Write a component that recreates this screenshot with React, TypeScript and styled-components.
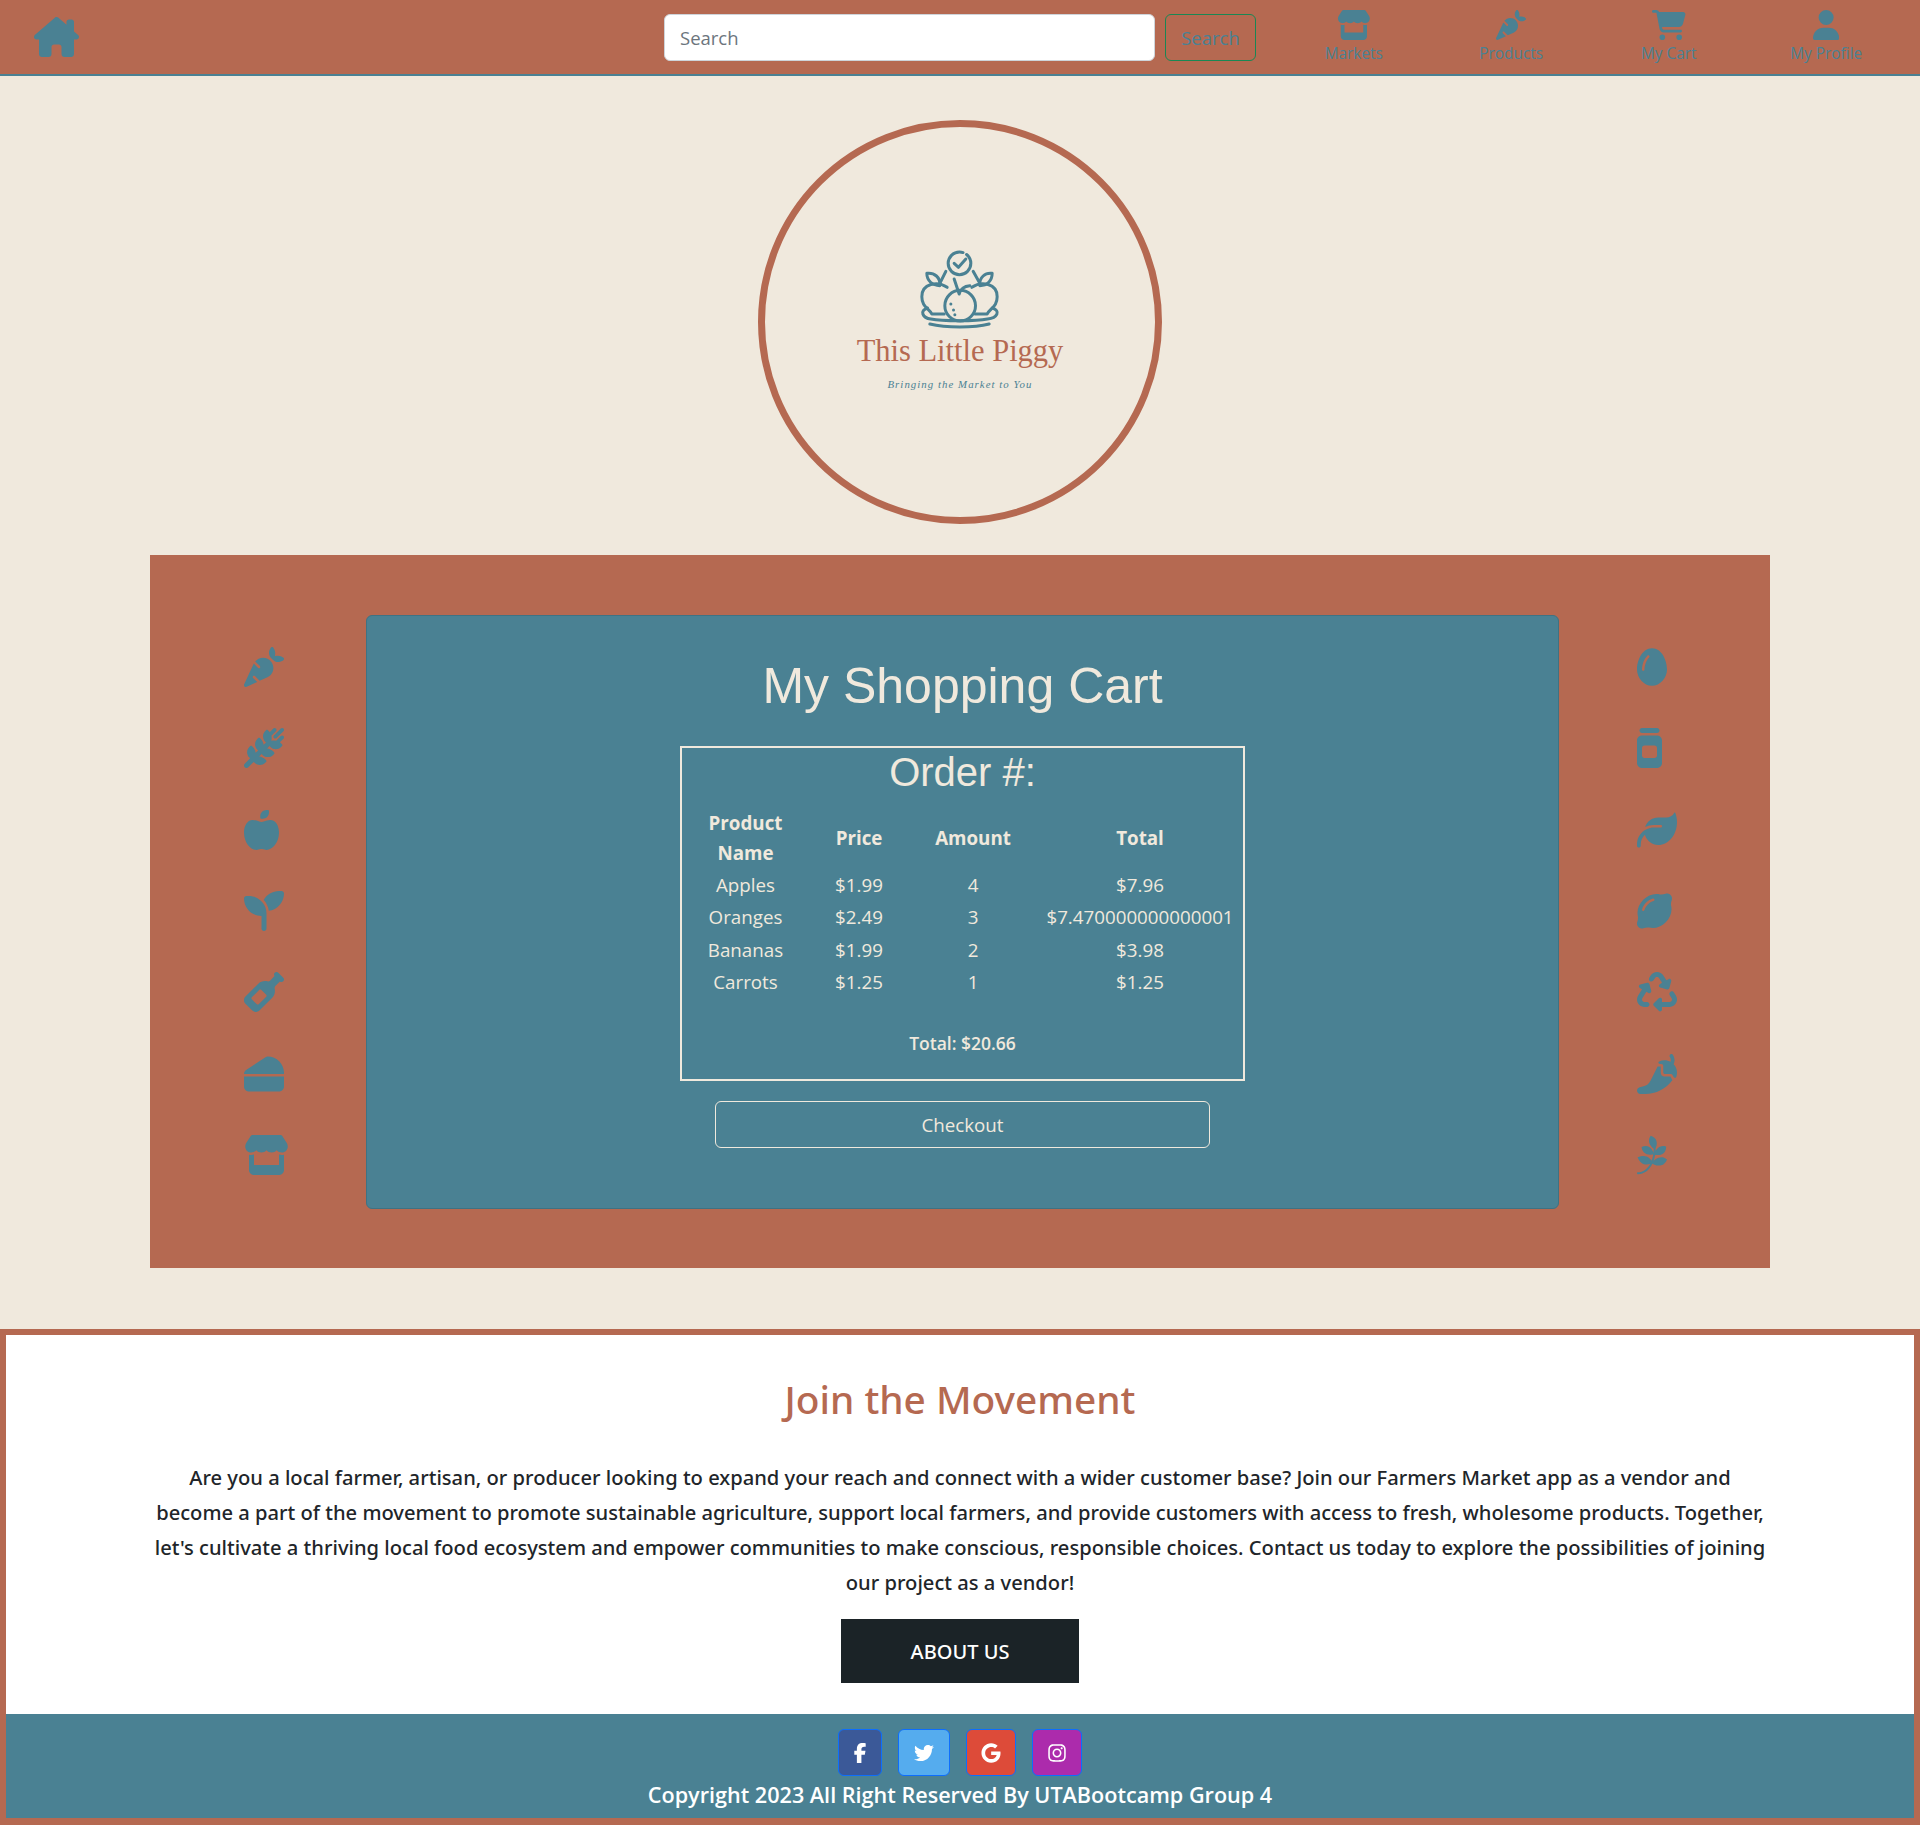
import * as React from 'react';
import styled, { createGlobalStyle } from 'styled-components';
import {
  FaAppleWhole, FaCarrot, FaCartShopping, FaCheese, FaEgg, FaFacebookF, FaGoogle, FaHouseChimney,
  FaInstagram, FaJar, FaLeaf, FaLemon, FaPagelines, FaPepperHot, FaRecycle, FaSeedling, FaStore,
  FaTwitter, FaUser, FaWheatAwn, FaWineBottle,
} from 'react-icons/fa6';

const terracotta = '#b56951';
const teal = '#4a8193';
const cream = '#f0e9dd';
const bodyFont = '"Open Sans", "Noto Sans", sans-serif';
const mediumFont = '"Noto Sans", "Open Sans", sans-serif';
const headFont = '"Liberation Sans", Arial, sans-serif';

const GlobalStyle = createGlobalStyle`
  * { box-sizing: border-box; }
  body {
    margin: 0;
    background: ${cream};
    font-family: ${bodyFont};
    color: #212529;
  }
`;

// font awesome glyphs are wider or narrower than 1em, so the box follows the viewBox
const Glyph = styled.span<{ $w: number; $h: number }>`
  display: block;
  flex: none;
  width: ${(p) => p.$w}px;
  height: ${(p) => p.$h}px;
  & svg { display: block; width: 100%; height: 100%; }
`;

const Header = styled.header`
  height: 76px;
  background: ${terracotta};
  border-bottom: 2px solid ${teal};
  display: flex;
  align-items: center;
  padding: 0 15px 0 34px;
  color: ${teal};
`;
const HomeLink = styled.a`
  display: flex;
  color: ${teal};
  margin-right: auto;
`;
const SearchInput = styled.input`
  width: 491px;
  height: 47px;
  border: 1px solid #ced4da;
  border-radius: 6px;
  background: #fff;
  padding: 0 15px;
  font-family: ${bodyFont};
  font-size: 18.5px;
  &::placeholder { color: #6c757d; }
`;
const SearchButton = styled.button`
  width: 91px;
  height: 47px;
  margin-left: 10px;
  margin-right: 19px;
  background: transparent;
  border: 1px solid #198754;
  border-radius: 6px;
  color: ${teal};
  font-family: ${bodyFont};
  font-size: 18.5px;
  padding: 0;
`;
const NavItem = styled.a`
  width: 157.5px;
  height: 62px;
  display: flex;
  flex-direction: column;
  align-items: center;
  color: ${teal};
  font-size: 15.4px;
  line-height: 20px;
  padding-top: 4px;
  & > span { margin-bottom: 4px; }
`;
const Main = styled.main`
  display: flex;
  flex-direction: column;
  align-items: center;
  padding-top: 44px;
  padding-bottom: 61px;
`;
const LogoCircle = styled.div`
  width: 404px;
  height: 404px;
  border: 7px solid ${terracotta};
  border-radius: 50%;
  display: flex;
  flex-direction: column;
  align-items: center;
  justify-content: center;
  margin-bottom: 31px;
`;
const LogoMark = styled.svg`
  width: 82px;
  height: 80px;
  margin-top: -5px;
`;
const LogoName = styled.div`
  font-family: "Liberation Serif", serif;
  font-size: 30.5px;
  line-height: 40px;
  color: ${terracotta};
  margin-top: 2px;
`;
const LogoTag = styled.div`
  font-family: "Liberation Serif", serif;
  font-style: italic;
  font-size: 10.8px;
  line-height: 14px;
  letter-spacing: 1.05px;
  color: ${teal};
  margin-top: 6px;
`;
const Panel = styled.section`
  width: 1620px;
  height: 713px;
  background: ${terracotta};
  display: flex;
  padding-top: 60px;
`;
const IconColumn = styled.div<{ $width: number; $left: number }>`
  width: ${(p) => p.$width}px;
  padding-left: ${(p) => p.$left}px;
  padding-top: 32px;
  display: flex;
  flex-direction: column;
  align-items: flex-start;
  gap: 41.33px;
  color: ${teal};
`;
const Card = styled.div`
  width: 1193px;
  height: 594px;
  background: ${teal};
  border: 1px solid #3f7283;
  border-radius: 6px;
  padding-top: 41px;
  display: flex;
  flex-direction: column;
  align-items: center;
  color: ${cream};
`;
const CardTitle = styled.h1`
  margin: 0 0 31px;
  font-family: ${headFont};
  font-size: 50px;
  font-weight: 400;
  line-height: 58px;
`;
const OrderBox = styled.div`
  width: 565px;
  height: 335px;
  border: 2px solid ${cream};
  display: flex;
  flex-direction: column;
  align-items: center;
`;
const OrderTitle = styled.h2`
  margin: 0 0 10px;
  font-family: ${headFont};
  font-size: 40px;
  font-weight: 400;
  line-height: 48px;
`;
const OrderTable = styled.table`
  width: 561px;
  table-layout: fixed;
  border-collapse: collapse;
  font-size: 18.75px;
  text-align: center;
`;
const Head = styled.th`
  padding: 0;
  font-weight: 700;
  line-height: 30px;
  height: 63px;
`;
const Cell = styled.td`
  padding: 0;
  height: 32.3px;
  line-height: 30px;
  white-space: nowrap;
`;
const OrderTotal = styled.div`
  margin-top: 30px;
  font-size: 17.5px;
  font-weight: 600;
  line-height: 30px;
`;
const CheckoutButton = styled.button`
  margin-top: 20px;
  width: 495px;
  height: 47px;
  background: transparent;
  border: 1px solid ${cream};
  border-radius: 6px;
  color: ${cream};
  font-family: ${bodyFont};
  font-size: 18.75px;
`;
const Footer = styled.footer`
  height: 496px;
  background: #fff;
  border: 6px solid ${terracotta};
  border-bottom-width: 7px;
  display: flex;
  flex-direction: column;
  align-items: center;
`;
const JoinTitle = styled.h2`
  margin: 39px 0 36px;
  font-family: ${mediumFont};
  font-size: 38.8px;
  font-weight: 500;
  line-height: 50px;
  color: ${terracotta};
`;
const JoinText = styled.p`
  margin: 0 0 19px;
  width: 1620px;
  font-family: ${mediumFont};
  font-size: 20.15px;
  font-weight: 500;
  line-height: 35px;
  text-align: center;
  color: #212529;
`;
const AboutButton = styled.button`
  width: 238px;
  height: 64px;
  background: #1b2327;
  border: 0;
  color: #fff;
  font-family: ${mediumFont};
  font-size: 20px;
  font-weight: 500;
`;
const Legal = styled.div`
  margin-top: auto;
  width: 100%;
  height: 104px;
  background: ${teal};
  padding-top: 15px;
  display: flex;
  flex-direction: column;
  align-items: center;
`;
const SocialRow = styled.div`
  display: flex;
  gap: 16px;
`;
const SocialLink = styled.a<{ $bg: string; $width: number }>`
  width: ${(p) => p.$width}px;
  height: 47px;
  background: ${(p) => p.$bg};
  border: 1px solid #0d6efd;
  border-radius: 6px;
  color: #fff;
  display: flex;
  align-items: center;
  justify-content: center;
  font-size: 20px;
`;
const Copyright = styled.div`
  margin-top: 1px;
  color: #fff;
  font-size: 21.6px;
  font-weight: 600;
  line-height: 36px;
`;

const rows = [
  ['Apples', '$1.99', '4', '$7.96'],
  ['Oranges', '$2.49', '3', '$7.470000000000001'],
  ['Bananas', '$1.99', '2', '$3.98'],
  ['Carrots', '$1.25', '1', '$1.25'],
];

const navItems = [
  { label: 'Markets', w: 33.75, icon: <FaStore /> },
  { label: 'Products', w: 30, icon: <FaCarrot /> },
  { label: 'My Cart', w: 33.75, icon: <FaCartShopping /> },
  { label: 'My Profile', w: 26.25, icon: <FaUser /> },
];

const leftIcons = [
  { w: 40, icon: <FaCarrot /> },
  { w: 40, icon: <FaWheatAwn /> },
  { w: 35, icon: <FaAppleWhole /> },
  { w: 40, icon: <FaSeedling /> },
  { w: 40, icon: <FaWineBottle /> },
  { w: 40, icon: <FaCheese /> },
  { w: 45, icon: <FaStore /> },
];

const rightIcons = [
  { w: 30, icon: <FaEgg /> },
  { w: 25, icon: <FaJar /> },
  { w: 40, icon: <FaLeaf /> },
  { w: 35, icon: <FaLemon /> },
  { w: 40, icon: <FaRecycle /> },
  { w: 40, icon: <FaPepperHot /> },
  { w: 30, icon: <FaPagelines /> },
];

const Logo = () => (
  <LogoMark viewBox="300 55 245 240" fill="none" stroke={teal} strokeWidth="9" strokeLinecap="round" strokeLinejoin="round">
    <circle cx="421" cy="98" r="34" strokeDasharray="170 12 32 0" />
    <path d="M405 98 L418 110 L440 85" />
    <path d="M384 170 C355 150 308 158 308 198 C308 228 328 232 338 250 L375 250" />
    <path d="M458 170 C487 150 534 158 534 198 C534 228 514 232 504 250 L468 250" />
    <path d="M323 128 C345 125 365 140 362 165 C340 165 323 150 323 128 Z" />
    <path d="M519 128 C499 125 479 140 482 165 C504 165 519 150 519 128 Z" />
    <path d="M380 122 L362 158 M462 122 L482 158" />
    <circle cx="423" cy="225" r="46" />
    <path d="M405 145 L420 190 C425 172 438 166 452 165" />
    <path d="M395 220 h0.1 M403 238 h0.1 M407 252 h0.1" />
    <path d="M325 232 C300 240 310 262 335 265 C370 272 470 272 505 265 C535 262 545 240 520 232" />
    <path d="M332 280 C380 292 465 292 510 280" />
  </LogoMark>
);

export default function App() {
  return (
    <>
      <GlobalStyle />
      <Header>
        <HomeLink><Glyph $w={45} $h={40}><FaHouseChimney /></Glyph></HomeLink>
        <SearchInput placeholder="Search" />
        <SearchButton>Search</SearchButton>
        {navItems.map((item) => (
          <NavItem key={item.label}>
            <Glyph $w={item.w} $h={30}>{item.icon}</Glyph>
            {item.label}
          </NavItem>
        ))}
      </Header>
      <Main>
        <LogoCircle>
          <Logo />
          <LogoName>This Little Piggy</LogoName>
          <LogoTag>Bringing the Market to You</LogoTag>
        </LogoCircle>
        <Panel>
          <IconColumn $width={216} $left={94}>
            {leftIcons.map((item, i) => <Glyph key={i} $w={item.w} $h={40}>{item.icon}</Glyph>)}
          </IconColumn>
          <Card>
            <CardTitle>My Shopping Cart</CardTitle>
            <OrderBox>
              <OrderTitle>Order #:</OrderTitle>
              <OrderTable>
                <colgroup>
                  <col width="127" /><col width="100" /><col width="128" /><col width="206" />
                </colgroup>
                <thead>
                  <tr><Head>Product Name</Head><Head>Price</Head><Head>Amount</Head><Head>Total</Head></tr>
                </thead>
                <tbody>
                  {rows.map((row) => (
                    <tr key={row[0]}>{row.map((c, i) => <Cell key={i}>{c}</Cell>)}</tr>
                  ))}
                </tbody>
              </OrderTable>
              <OrderTotal>Total: $20.66</OrderTotal>
            </OrderBox>
            <CheckoutButton>Checkout</CheckoutButton>
          </Card>
          <IconColumn $width={211} $left={78}>
            {rightIcons.map((item, i) => <Glyph key={i} $w={item.w} $h={40}>{item.icon}</Glyph>)}
          </IconColumn>
        </Panel>
      </Main>
      <Footer>
        <JoinTitle>Join the Movement</JoinTitle>
        <JoinText>
          Are you a local farmer, artisan, or producer looking to expand your reach and connect with a wider customer base? Join our Farmers Market app as a vendor and become a part of the movement to promote sustainable agriculture, support local farmers, and provide customers with access to fresh, wholesome products. Together, let's cultivate a thriving local food ecosystem and empower communities to make conscious, responsible choices. Contact us today to explore the possibilities of joining our project as a vendor!
        </JoinText>
        <AboutButton>ABOUT US</AboutButton>
        <Legal>
          <SocialRow>
            <SocialLink $bg="#3b5998" $width={44}><FaFacebookF /></SocialLink>
            <SocialLink $bg="#55acee" $width={52}><FaTwitter /></SocialLink>
            <SocialLink $bg="#dd4b39" $width={50}><FaGoogle /></SocialLink>
            <SocialLink $bg="#ac2bac" $width={50}><FaInstagram /></SocialLink>
          </SocialRow>
          <Copyright>Copyright 2023 All Right Reserved By UTABootcamp Group 4</Copyright>
        </Legal>
      </Footer>
    </>
  );
}
